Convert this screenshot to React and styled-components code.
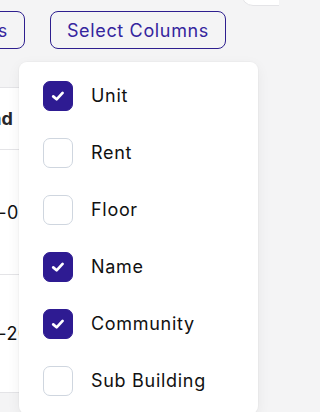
import React, { useState } from "react";
import styled, { createGlobalStyle } from "styled-components";

const columns = [
  { key: "unit", label: "Unit", checked: true },
  { key: "rent", label: "Rent", checked: false },
  { key: "floor", label: "Floor", checked: false },
  { key: "name", label: "Name", checked: true },
  { key: "community", label: "Community", checked: true },
  { key: "subBuilding", label: "Sub Building", checked: false },
];

const rows = [
  { id: 1, value: "555-0143", height: 125 },
  { id: 2, value: "555-2087", height: 118 },
];

const App = () => {
  const [selected, setSelected] = useState(columns);

  // flip one column on or off
  const toggle = (key) => {
    setSelected((prev) =>
      prev.map((c) => (c.key === key ? { ...c, checked: !c.checked } : c))
    );
  };

  return (
    <>
      <GlobalStyle />
      <Page>
        <HeaderStrip>
          <HeaderCard />
        </HeaderStrip>
        <Toolbar>
          <OutlineButton>Filters</OutlineButton>
          <MenuAnchor>
            <OutlineButton>Select Columns</OutlineButton>
            <Dropdown>
              {selected.map((c) => (
                <Option key={c.key} onClick={() => toggle(c.key)}>
                  <Box checked={c.checked}>
                    {c.checked && (
                      <svg width="16" height="16" viewBox="0 0 16 16">
                        <polyline
                          points="3.2,8.4 6.6,11.3 12.6,4.9"
                          fill="none"
                          stroke="#fff"
                          strokeWidth="2.7"
                          strokeLinecap="round"
                          strokeLinejoin="round"
                        />
                      </svg>
                    )}
                  </Box>
                  <OptionLabel>{c.label}</OptionLabel>
                </Option>
              ))}
            </Dropdown>
          </MenuAnchor>
        </Toolbar>
        <TableCard>
          <HeadRow>
            <HeadCell>Lead</HeadCell>
          </HeadRow>
          {rows.map((r) => (
            <BodyRow key={r.id} height={r.height}>
              <BodyCell>{r.value}</BodyCell>
            </BodyRow>
          ))}
        </TableCard>
      </Page>
    </>
  );
};

const GlobalStyle = createGlobalStyle`
  body {
    margin: 0;
    background: #f4f4f5;
    font-family: Inter, "Liberation Sans", sans-serif;
    overflow: hidden;
  }
`;

const Page = styled.div`
  position: relative;
  width: 279px;
  height: 412px;
  overflow: hidden;
`;

const HeaderStrip = styled.div`
  display: flex;
  justify-content: flex-end;
  height: 4px;
`;

const HeaderCard = styled.div`
  width: 48px;
  height: 40px;
  margin-top: -36px;
  margin-right: -12px;
  flex-shrink: 0;
  background: #fff;
  border: 1px solid #e4e4e7;
  border-radius: 12px;
`;

const Toolbar = styled.div`
  display: flex;
  justify-content: flex-end;
  align-items: center;
  gap: 25px;
  margin-top: 7px;
  padding-right: 53px;
`;

const OutlineButton = styled.button`
  height: 38px;
  padding: 0 16px;
  flex-shrink: 0;
  background: transparent;
  border: 1px solid #2e1f8f;
  border-radius: 8px;
  color: #35259e;
  font-family: Inter, "Liberation Sans", sans-serif;
  font-size: 18px;
  letter-spacing: 0.65px;
  white-space: nowrap;
  cursor: pointer;
`;

const MenuAnchor = styled.div`
  position: relative;
  flex-shrink: 0;
`;

const Dropdown = styled.div`
  position: absolute;
  top: calc(100% + 13px);
  right: -32px;
  width: 239px;
  padding: 5px 24px;
  box-sizing: border-box;
  background: #fff;
  border-radius: 8px;
  box-shadow: 0 4px 14px rgba(0, 0, 0, 0.06), 0 0 0 1px rgba(0, 0, 0, 0.02);
  z-index: 10;
`;

const Option = styled.div`
  display: flex;
  align-items: center;
  gap: 18px;
  height: 57px;
  cursor: pointer;
`;

const Box = styled.span`
  width: 30px;
  height: 30px;
  box-sizing: border-box;
  display: flex;
  align-items: center;
  justify-content: center;
  border-radius: 7px;
  background: ${(p) => (p.checked ? "#2e1b92" : "#fff")};
  border: 1px solid ${(p) => (p.checked ? "#2e1b92" : "#cfd6df")};
`;

const OptionLabel = styled.span`
  font-size: 18px;
  letter-spacing: 0.7px;
  color: #111;
`;

const TableCard = styled.div`
  margin-top: 38px;
  margin-left: -100px;
  width: 330px;
  background: #fff;
  border-top: 1px solid #e4e4e7;
`;

const HeadRow = styled.div`
  display: flex;
  align-items: center;
  height: 61px;
  border-bottom: 1px solid #e4e4e7;
`;

const HeadCell = styled.div`
  padding-left: 70px;
  font-size: 18px;
  font-weight: 700;
  color: #27272a;
`;

const BodyRow = styled.div`
  display: flex;
  align-items: center;
  height: ${(p) => p.height - 1}px;
  border-bottom: 1px solid #e4e4e7;
`;

const BodyCell = styled.div`
  padding-left: 64px;
  font-size: 18px;
  letter-spacing: 0.5px;
  color: #111;
`;

export default App;
